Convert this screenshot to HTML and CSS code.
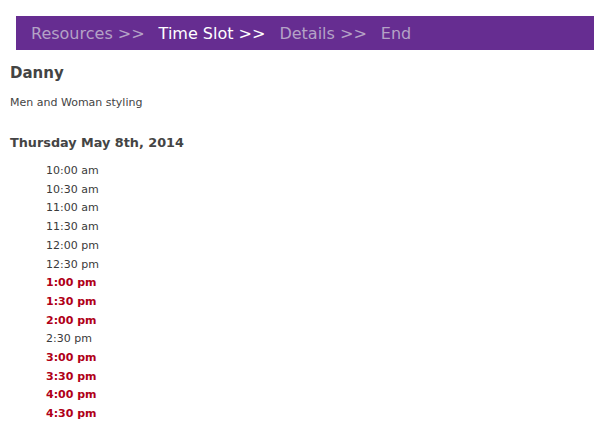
FILE: index.html
```html
<!DOCTYPE html>
<html>
<head>
<meta charset="utf-8">
<link rel="stylesheet" href="styles.css">
</head>
<body>
<div class="page">
  <nav class="steps">
    <span class="step">Resources &gt;&gt;</span>
    <span class="step active">Time Slot &gt;&gt;</span>
    <span class="step">Details &gt;&gt;</span>
    <span class="step">End</span>
  </nav>
  <h2 class="name">Danny</h2>
  <p class="desc">Men and Woman styling</p>
  <h3 class="date">Thursday May 8th, 2014</h3>
  <ul class="slots">
    <li>10:00 am</li>
    <li>10:30 am</li>
    <li>11:00 am</li>
    <li>11:30 am</li>
    <li>12:00 pm</li>
    <li>12:30 pm</li>
    <li class="taken">1:00 pm</li>
    <li class="taken">1:30 pm</li>
    <li class="taken">2:00 pm</li>
    <li>2:30 pm</li>
    <li class="taken">3:00 pm</li>
    <li class="taken">3:30 pm</li>
    <li class="taken">4:00 pm</li>
    <li class="taken">4:30 pm</li>
  </ul>
</div>
</body>
</html>
```

FILE: styles.css
```css
html, body {
  margin: 0;
  padding: 0;
  background: #ffffff;
}
body {
  font-family: "DejaVu Sans", Verdana, sans-serif;
  color: #444444;
}
.page {
  padding: 16px 10px 0 10px;
}
.steps {
  margin: 0 10px 0 6px;
  height: 34px;
  background: #662d91;
  display: flex;
  align-items: center;
  padding-left: 15px;
  gap: 14px;
  font-family: "DejaVu Sans", Tahoma, sans-serif;
  font-size: 16px;
  color: #b4a2c6;
}
.step.active {
  color: #ffffff;
}
.name {
  margin: 14px 0 0 0;
  font-size: 15px;
  line-height: 18px;
  font-weight: bold;
}
.desc {
  margin: 14px 0 0 0;
  font-size: 11px;
  line-height: 14px;
}
.date {
  margin: 25px 0 0 0;
  font-size: 12.8px;
  line-height: 16px;
  font-weight: bold;
}
.slots {
  list-style: none;
  margin: 11px 0 0 0;
  padding: 0 0 0 36px;
  font-size: 11px;
  line-height: 18.7px;
  color: #3a3a3a;
}
.slots .taken {
  color: #b00018;
  font-weight: bold;
}
```
